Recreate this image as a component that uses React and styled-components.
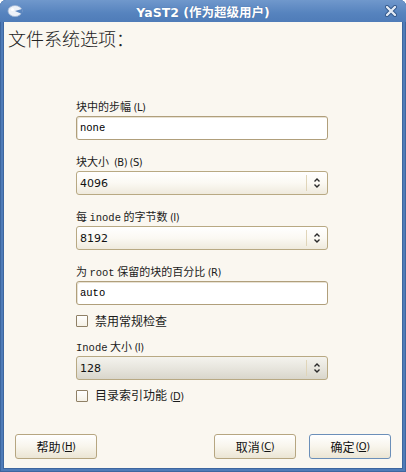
import React from 'react';
import styled, { createGlobalStyle } from 'styled-components';

const GlobalStyle = createGlobalStyle`
    html, body {
        margin: 0;
        padding: 0;
        background: #ffffff;
    }
    body {
        font-family: "Noto Sans CJK SC", "DejaVu Sans", sans-serif;
        color: #1b1b1b;
    }
`

function Spinner() {
    return (
        <svg width="8" height="12" viewBox="0 0 8 12">
            <path d="M1.5 4.5 L4 2 L6.5 4.5" fill="none" stroke="#2a2a2a" strokeWidth="1.4" />
            <path d="M1.5 7.5 L4 10 L6.5 7.5" fill="none" stroke="#2a2a2a" strokeWidth="1.4" />
        </svg>
    )
}

function AppIcon() {
    return (
        <svg width="16" height="14" viewBox="0 0 16 14">
            <ellipse cx="8" cy="7" rx="7" ry="5.5" fill="#eef2f8" stroke="#9fb5d4" strokeWidth="0.8" />
            <path d="M8 7 L15 5 L15 10 Z" fill="#5b86bf" />
            <circle cx="5.5" cy="5.5" r="1.6" fill="#ffffff" />
        </svg>
    )
}

function CloseIcon() {
    return (
        <svg width="12" height="12" viewBox="0 0 12 12">
            <path d="M2 2 L10 10 M10 2 L2 10" stroke="#2f5486" strokeWidth="4" strokeLinecap="round" />
            <path d="M2 2 L10 10 M10 2 L2 10" stroke="#e3ebf6" strokeWidth="2.4" strokeLinecap="round" />
        </svg>
    )
}

function Mn({ children, under }) {
    return <Mnemonic>({under ? <u>{children}</u> : children})</Mnemonic>
}

function App() {
    return (
        <>
            <GlobalStyle />
            <Window>
                <TitleBar>
                    <TitleIcon><AppIcon /></TitleIcon>
                    <Title>YaST2 (作为超级用户)</Title>
                    <TitleIcon><CloseIcon /></TitleIcon>
                </TitleBar>
                <Body>
                    <Heading>文件系统选项：</Heading>
                    <Form>
                        <Group>
                            <Label>块中的步幅 <Mn>L</Mn></Label>
                            <TextInput><Mono>none</Mono></TextInput>
                        </Group>
                        <Group>
                            <Label>块大小 &nbsp;<Mn>B</Mn> <Mn>S</Mn></Label>
                            <Select>
                                <SelectValue>4096</SelectValue>
                                <SpinBox><Spinner /></SpinBox>
                            </Select>
                        </Group>
                        <Group>
                            <Label>每 <Mono>inode</Mono> 的字节数 <Mn>I</Mn></Label>
                            <Select>
                                <SelectValue>8192</SelectValue>
                                <SpinBox><Spinner /></SpinBox>
                            </Select>
                        </Group>
                        <Group>
                            <Label>为 <Mono>root</Mono> 保留的块的百分比 <Mn>R</Mn></Label>
                            <TextInput><Mono>auto</Mono></TextInput>
                        </Group>
                        <CheckRow>
                            <CheckBox />
                            <CheckText>禁用常规检查</CheckText>
                        </CheckRow>
                        <Group>
                            <Label><Mono>Inode</Mono> 大小 <Mn>I</Mn></Label>
                            <Select grey>
                                <SelectValue>128</SelectValue>
                                <SpinBox><Spinner /></SpinBox>
                            </Select>
                        </Group>
                        <CheckRow>
                            <CheckBox />
                            <CheckText>目录索引功能 <Mn under>D</Mn></CheckText>
                        </CheckRow>
                    </Form>
                    <Footer>
                        <Button>帮助 <Mn under>H</Mn></Button>
                        <Spacer />
                        <Button>取消 <Mn under>C</Mn></Button>
                        <Button isDefault>确定 <Mn under>O</Mn></Button>
                    </Footer>
                </Body>
            </Window>
        </>
    )
}

const Window = styled.div`
    width: 406px;
    height: 472px;
    display: flex;
    flex-direction: column;
    background: #4f7cb8;
    border-radius: 6px 6px 0 0;
    box-sizing: border-box;
    box-shadow: inset 0 0 0 1px #3d669f;
`

const TitleBar = styled.div`
    height: 22px;
    display: grid;
    grid-template-columns: 30px 1fr 30px;
    align-items: center;
    background: linear-gradient(#7098cc, #5683be 60%, #4f7cb8);
    border-radius: 6px 6px 0 0;
`

const TitleIcon = styled.div`
    display: flex;
    justify-content: center;
    align-items: center;
`

const Title = styled.div`
    text-align: center;
    color: #ffffff;
    font-weight: bold;
    font-size: 12.5px;
    font-family: "DejaVu Sans", "Noto Sans CJK SC", sans-serif;
    text-shadow: 0 0 1px #3a5f93;
`

const Body = styled.div`
    flex: 1;
    margin: 0 3px 3px 3px;
    background: #faf7f0;
    display: flex;
    flex-direction: column;
    border: 1px solid #3d669f;
    border-top: none;
`

const Heading = styled.div`
    font-size: 18px;
    line-height: 22px;
    padding: 5px 0 0 4px;
    font-family: "Noto Sans CJK SC", sans-serif;
    font-weight: 300;
    color: #222;
`

const Form = styled.div`
    margin: 49px 0 0 72px;
    width: 252px;
    display: flex;
    flex-direction: column;
`

const Group = styled.div`
    display: flex;
    flex-direction: column;
    margin-bottom: 13px;
`

const Label = styled.div`
    font-size: 11px;
    line-height: 17px;
    height: 17px;
    margin-bottom: 1px;
    white-space: pre;
    color: #1b1b1b;
`

const Mnemonic = styled.span`
    font-size: 10px;
    letter-spacing: -0.5px;
    font-family: "DejaVu Sans", sans-serif;
`

const Mono = styled.span`
    font-family: "Liberation Mono", "DejaVu Sans Mono", monospace;
    font-size: 10.5px;
`

const TextInput = styled.div`
    height: 24px;
    box-sizing: border-box;
    border: 1px solid #b09f7b;
    border-radius: 3px;
    background: #ffffff;
    box-shadow: inset 1px 1px 0 #e8e2d4;
    display: flex;
    align-items: center;
    padding-left: 3px;
    color: #000;
`

const Select = styled.div`
    height: 24px;
    box-sizing: border-box;
    border: 1px solid #b8a983;
    border-radius: 3px;
    background: ${(props) => props.grey
        ? 'linear-gradient(#f4f3ee, #e6e4dc 55%, #d9d6cb)'
        : 'linear-gradient(#ffffff, #fbf9f3 50%, #efeadd)'};
    display: flex;
    align-items: center;
`

const SelectValue = styled.div`
    flex: 1;
    font-size: 11px;
    font-family: "DejaVu Sans", sans-serif;
    padding-left: 3px;
    color: #111;
`

const SpinBox = styled.div`
    width: 19px;
    height: 16px;
    border-left: 1px solid #e0d5b9;
    display: flex;
    align-items: center;
    justify-content: center;
    margin-right: 1px;
`

const CheckRow = styled.div`
    display: flex;
    align-items: center;
    gap: 7px;
    height: 18px;
    margin: -6px 0 8px 0;
`

const CheckBox = styled.div`
    width: 12px;
    height: 12px;
    box-sizing: border-box;
    border: 1px solid #8f8066;
    background: linear-gradient(#ffffff, #f5f1e6);
    border-radius: 1px;
`

const CheckText = styled.div`
    font-size: 12px;
    line-height: 18px;
`

const Footer = styled.div`
    margin-top: auto;
    display: flex;
    gap: 13px;
    padding: 0 11px 9px 11px;
`

const Spacer = styled.div`
    flex: 1;
`

const Button = styled.div`
    width: 82px;
    height: 25px;
    box-sizing: border-box;
    border: 1px solid ${(props) => props.isDefault ? '#6b8fb9' : '#b6a681'};
    border-radius: 3px;
    background: linear-gradient(#ffffff, #f8f5ec 50%, #ebe5d4);
    display: flex;
    align-items: center;
    justify-content: center;
    font-size: 12px;
    gap: 1px;
    color: #111;
`

export default App;
